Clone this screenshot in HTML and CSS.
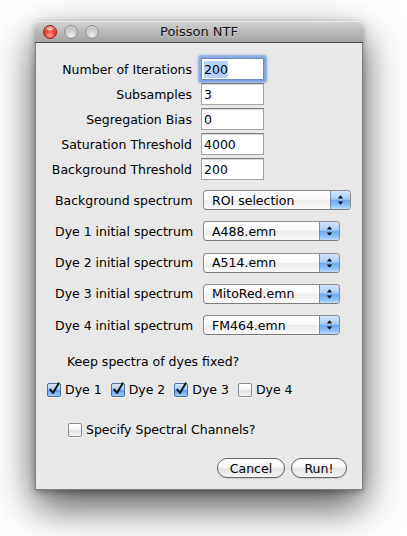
FILE: index.html
```html
<!DOCTYPE html>
<html>
<head>
<meta charset="utf-8">
<title>Poisson NTF</title>
<link rel="stylesheet" href="styles.css">
</head>
<body>
<div class="stage">
  <div class="window">
    <div class="titlebar">
      <div class="lights">
        <span class="light red"></span>
        <span class="light"></span>
        <span class="light"></span>
      </div>
      <div class="title">Poisson NTF</div>
      <div></div>
    </div>
    <div class="content">
      <div class="fields">
        <span class="flabel">Number of Iterations</span><div class="field focus"><span class="sel">200</span></div>
        <span class="flabel">Subsamples</span><div class="field">3</div>
        <span class="flabel">Segregation Bias</span><div class="field">0</div>
        <span class="flabel">Saturation Threshold</span><div class="field">4000</div>
        <span class="flabel">Background Threshold</span><div class="field">200</div>
      </div>

      <div class="popups">
        <span class="plabel">Background spectrum</span>
        <div class="popup wide"><span class="ptext">ROI selection</span><span class="stepper"><svg width="19" height="18" viewBox="0 0 19 18"><polygon points="6.8,7.6 9.5,4.2 12.2,7.6" fill="#111"/><polygon points="6.8,10.4 9.5,13.8 12.2,10.4" fill="#111"/></svg></span></div>
        <span class="plabel">Dye 1 initial spectrum</span>
        <div class="popup"><span class="ptext">A488.emn</span><span class="stepper"><svg width="19" height="18" viewBox="0 0 19 18"><polygon points="6.8,7.6 9.5,4.2 12.2,7.6" fill="#111"/><polygon points="6.8,10.4 9.5,13.8 12.2,10.4" fill="#111"/></svg></span></div>
        <span class="plabel">Dye 2 initial spectrum</span>
        <div class="popup"><span class="ptext">A514.emn</span><span class="stepper"><svg width="19" height="18" viewBox="0 0 19 18"><polygon points="6.8,7.6 9.5,4.2 12.2,7.6" fill="#111"/><polygon points="6.8,10.4 9.5,13.8 12.2,10.4" fill="#111"/></svg></span></div>
        <span class="plabel">Dye 3 initial spectrum</span>
        <div class="popup"><span class="ptext">MitoRed.emn</span><span class="stepper"><svg width="19" height="18" viewBox="0 0 19 18"><polygon points="6.8,7.6 9.5,4.2 12.2,7.6" fill="#111"/><polygon points="6.8,10.4 9.5,13.8 12.2,10.4" fill="#111"/></svg></span></div>
        <span class="plabel">Dye 4 initial spectrum</span>
        <div class="popup"><span class="ptext">FM464.emn</span><span class="stepper"><svg width="19" height="18" viewBox="0 0 19 18"><polygon points="6.8,7.6 9.5,4.2 12.2,7.6" fill="#111"/><polygon points="6.8,10.4 9.5,13.8 12.2,10.4" fill="#111"/></svg></span></div>
      </div>

      <div class="keep">Keep spectra of dyes fixed?</div>
      <div class="checks">
        <span class="chk"><span class="box on"><svg width="12" height="12" viewBox="0 0 12 12"><path d="M2.3 5.6 L5 9 L10.6 -0.6" fill="none" stroke="#151515" stroke-width="2" stroke-linecap="round" stroke-linejoin="round"/></svg></span>Dye 1</span>
        <span class="chk"><span class="box on"><svg width="12" height="12" viewBox="0 0 12 12"><path d="M2.3 5.6 L5 9 L10.6 -0.6" fill="none" stroke="#151515" stroke-width="2" stroke-linecap="round" stroke-linejoin="round"/></svg></span>Dye 2</span>
        <span class="chk"><span class="box on"><svg width="12" height="12" viewBox="0 0 12 12"><path d="M2.3 5.6 L5 9 L10.6 -0.6" fill="none" stroke="#151515" stroke-width="2" stroke-linecap="round" stroke-linejoin="round"/></svg></span>Dye 3</span>
        <span class="chk"><span class="box"></span>Dye 4</span>
      </div>

      <div class="specify"><span class="chk"><span class="box"></span>Specify Spectral Channels?</span></div>

      <div class="buttons">
        <button class="btn cancel">Cancel</button>
        <button class="btn run">Run!</button>
      </div>
    </div>
  </div>
</div>
</body>
</html>
```

FILE: styles.css
```css
html, body {
  margin: 0;
  padding: 0;
  background: #ffffff;
}
body {
  font-family: "DejaVu Sans", "Noto Sans", sans-serif;
  font-size: 12.5px;
  color: #000;
  width: 407px;
  height: 536px;
  overflow: hidden;
}
.stage {
  padding: 21px 0 0 35px;
}
.window {
  width: 328px;
  height: 469px;
  display: flex;
  flex-direction: column;
  border-radius: 5px 5px 0 0;
  box-shadow: 0 16px 40px rgba(0, 0, 0, 0.7), 0 2px 6px rgba(0, 0, 0, 0.3);
}
.titlebar {
  height: 22px;
  box-sizing: border-box;
  border-bottom: 1px solid #4a4a4a;
  border-radius: 5px 5px 0 0;
  background: linear-gradient(#d6d6d6, #bfbfbf 40%, #a4a4a4);
  box-shadow: inset 0 1px 0 rgba(255, 255, 255, 0.55);
  display: grid;
  grid-template-columns: 1fr auto 1fr;
  align-items: center;
  padding: 1px 8px 0 8px;
}
.lights {
  display: flex;
  gap: 7px;
}
.light {
  width: 14px;
  height: 14px;
  box-sizing: border-box;
  border-radius: 50%;
  border: 1px solid #8d8d8d;
  background: radial-gradient(circle at 50% 75%, #efefef 0%, #cdcdcd 45%, #a9a9a9 100%);
  box-shadow: inset 0 1px 1px rgba(255,255,255,0.6);
}
.light.red {
  border-color: #8e1a12;
  background:
    radial-gradient(ellipse 5px 3px at 50% 25%, rgba(255,255,255,0.9), rgba(255,255,255,0) 100%),
    radial-gradient(circle at 50% 78%, #ff9e8f 0%, #ef3a2b 45%, #b2120a 100%);
}
.title {
  font-size: 13px;
  color: #111;
  text-shadow: 0 1px 0 rgba(255, 255, 255, 0.4);
  line-height: 20px;
}
.content {
  flex: 1;
  background: #e8e8e8;
  border: 1px solid #808080;
  border-top: 0;
  display: flex;
  flex-direction: column;
}
.fields {
  margin-top: 15px;
  display: grid;
  grid-template-columns: 156px 63px;
  grid-auto-rows: 22px;
  column-gap: 9px;
  row-gap: 3px;
  align-items: center;
}
.flabel {
  text-align: right;
  white-space: nowrap;
}
.field {
  height: 22px;
  box-sizing: border-box;
  background: #fff;
  border: 1px solid #a4a4a4;
  border-top-color: #7b7b7b;
  box-shadow: inset 0 1px 0 #d6d6d6;
  padding: 2px 0 0 2px;
  line-height: 17px;
}
.field.focus {
  border-color: #6e8fbf;
  box-shadow: 0 0 0 1px #7fa5dc, 0 0 2px 3px rgba(110, 155, 222, 0.8);
  border-radius: 1px;
}
.sel {
  background: #b4d4fd;
  padding: 1px 0 1px 0;
}
.popups {
  margin-top: 10px;
  display: grid;
  grid-template-columns: 148px auto;
  grid-auto-rows: 20px;
  row-gap: 11.25px;
  padding-left: 19px;
  align-items: center;
}
.plabel {
  white-space: nowrap;
}
.popup {
  width: 137px;
  height: 20px;
  box-sizing: border-box;
  border: 1px solid #8c8c8c;
  border-bottom-color: #7c7c7c;
  border-radius: 4px;
  background: linear-gradient(#ffffff, #f7f7f7 48%, #ececec 52%, #f9f9f9);
  display: flex;
  align-items: center;
  overflow: hidden;
}
.popup.wide {
  width: 148px;
}
.ptext {
  padding-left: 8px;
  flex: 1;
  white-space: nowrap;
}
.stepper {
  width: 19px;
  height: 18px;
  border-left: 1px solid #6f8fc0;
  background: linear-gradient(#d4e6fb, #a9cdf6 45%, #6ea9ef 52%, #8cc1f7 80%, #b9dcfb);
  display: block;
}
.stepper svg {
  display: block;
}
.keep {
  margin-top: 19px;
  padding-left: 31px;
  line-height: 16px;
}
.checks {
  margin-top: 12px;
  padding-left: 11px;
  display: flex;
  gap: 9px;
  line-height: 16px;
}
.chk {
  display: flex;
  align-items: center;
  gap: 4px;
  white-space: nowrap;
}
.box {
  width: 14px;
  height: 14px;
  box-sizing: border-box;
  border: 1px solid #8a8a8a;
  border-radius: 2px;
  background: linear-gradient(#ffffff, #f1f1f1 50%, #e2e2e2 52%, #f4f4f4);
  box-shadow: 0 1px 0 rgba(255,255,255,0.5);
}
.box.on {
  border-color: #4f6f9f;
  background: linear-gradient(#d6e8fc, #a3c9f4 45%, #5f9ded 55%, #9fd0fb);
}
.box svg {
  display: block;
  overflow: visible;
}
.specify {
  margin-top: 24px;
  padding-left: 32px;
  line-height: 16px;
}
.buttons {
  margin-top: auto;
  display: flex;
  justify-content: flex-end;
  gap: 6px;
  padding: 0 15px 11px 0;
}
.btn {
  height: 20px;
  box-sizing: border-box;
  border: 1px solid #656565;
  border-radius: 10px;
  background: linear-gradient(#ffffff, #f6f6f6 45%, #e4e4e4 55%, #f5f5f5);
  box-shadow: 0 1px 1px rgba(0,0,0,0.12);
  font-family: "DejaVu Sans", "Noto Sans", sans-serif;
  font-size: 12.5px;
  color: #000;
  padding: 0;
  line-height: 17px;
}
.btn.cancel {
  width: 68px;
}
.btn.run {
  width: 56px;
}
```
